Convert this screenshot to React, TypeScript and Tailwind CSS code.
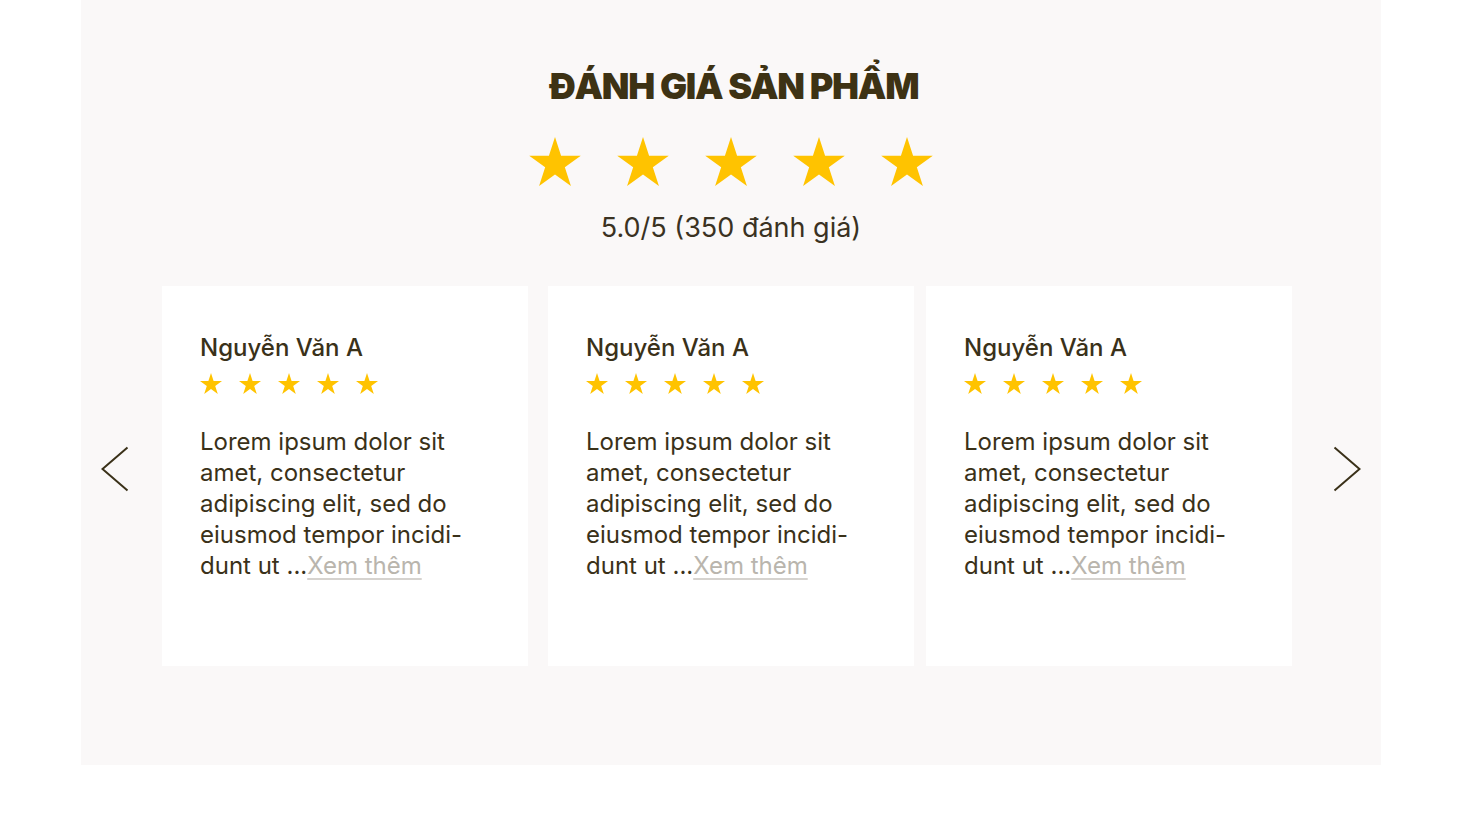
const Star = ({ className }: { className: string }) => (
  <svg viewBox="0.489 0 19.022 18.09" className={className} fill="#ffc300">
    <polygon points="10,0 12.245,6.91 19.511,6.91 13.633,11.18 15.878,18.09 10,13.82 4.122,18.09 6.367,11.18 0.489,6.91 7.755,6.91" />
  </svg>
);

const Arrow = ({ dir }: { dir: "left" | "right" }) => (
  <svg viewBox="0 0 28 46" className="w-[28px] h-[46px]" fill="none" stroke="#3a3119" strokeWidth={2}>
    <polyline points={dir === "left" ? "26.5,1.5 1.5,23 26.5,44.5" : "1.5,1.5 26.5,23 1.5,44.5"} />
  </svg>
);

const ReviewCard = ({ className }: { className?: string }) => (
  <div className={`w-[366px] h-[380px] bg-white pl-[38px] pr-4 pt-[44px] shrink-0 ${className ?? ""}`}>
    <h3 className="text-[24px] leading-[36px] font-medium text-[#3a3119]">Nguyễn Văn A</h3>
    <div className="flex gap-[17px] mt-[7px]">
      {[0, 1, 2, 3, 4].map((i) => (
        <Star key={i} className="w-[22px] h-[21px]" />
      ))}
    </div>
    <p className="mt-[32px] text-[24px] leading-[31px] text-[#3a3119]">
      Lorem ipsum dolor sit
      <br />
      amet, consectetur
      <br />
      adipiscing elit, sed do
      <br />
      eiusmod tempor incidi-
      <br />
      dunt ut ...
      <a className="text-[#b9b5ad] underline decoration-[#d6d3cf] underline-offset-4 cursor-pointer">Xem thêm</a>
    </p>
  </div>
);

export default function App() {
  return (
    <div className="min-h-[824px] bg-white" style={{ fontFamily: "Inter, 'Noto Sans', sans-serif" }}>
      <section className="ml-[81px] w-[1300px] h-[765px] bg-[#faf8f8] flex flex-col items-center">
        <h2 className="mt-[62px] ml-[6px] text-[36px] leading-[48px] font-black text-[#3d3214] tracking-[-0.035em]">
          ĐÁNH GIÁ SẢN PHẨM
        </h2>
        <div className="flex gap-[36px] mt-[27px]">
          {[0, 1, 2, 3, 4].map((i) => (
            <Star key={i} className="w-[52px] h-[49px]" />
          ))}
        </div>
        <p className="mt-[22px] text-[27px] leading-[40px] text-[#3a3222]">5.0/5 (350 đánh giá)</p>

        <div className="self-stretch flex items-start mt-[38px] pl-[20px]">
          <button className="mt-[160px]">
            <Arrow dir="left" />
          </button>
          <div className="flex ml-[33px]">
            <ReviewCard />
            <ReviewCard className="ml-[20px]" />
            <ReviewCard className="ml-[12px]" />
          </div>
          <button className="mt-[160px] ml-[41px]">
            <Arrow dir="right" />
          </button>
        </div>
      </section>
    </div>
  );
}
